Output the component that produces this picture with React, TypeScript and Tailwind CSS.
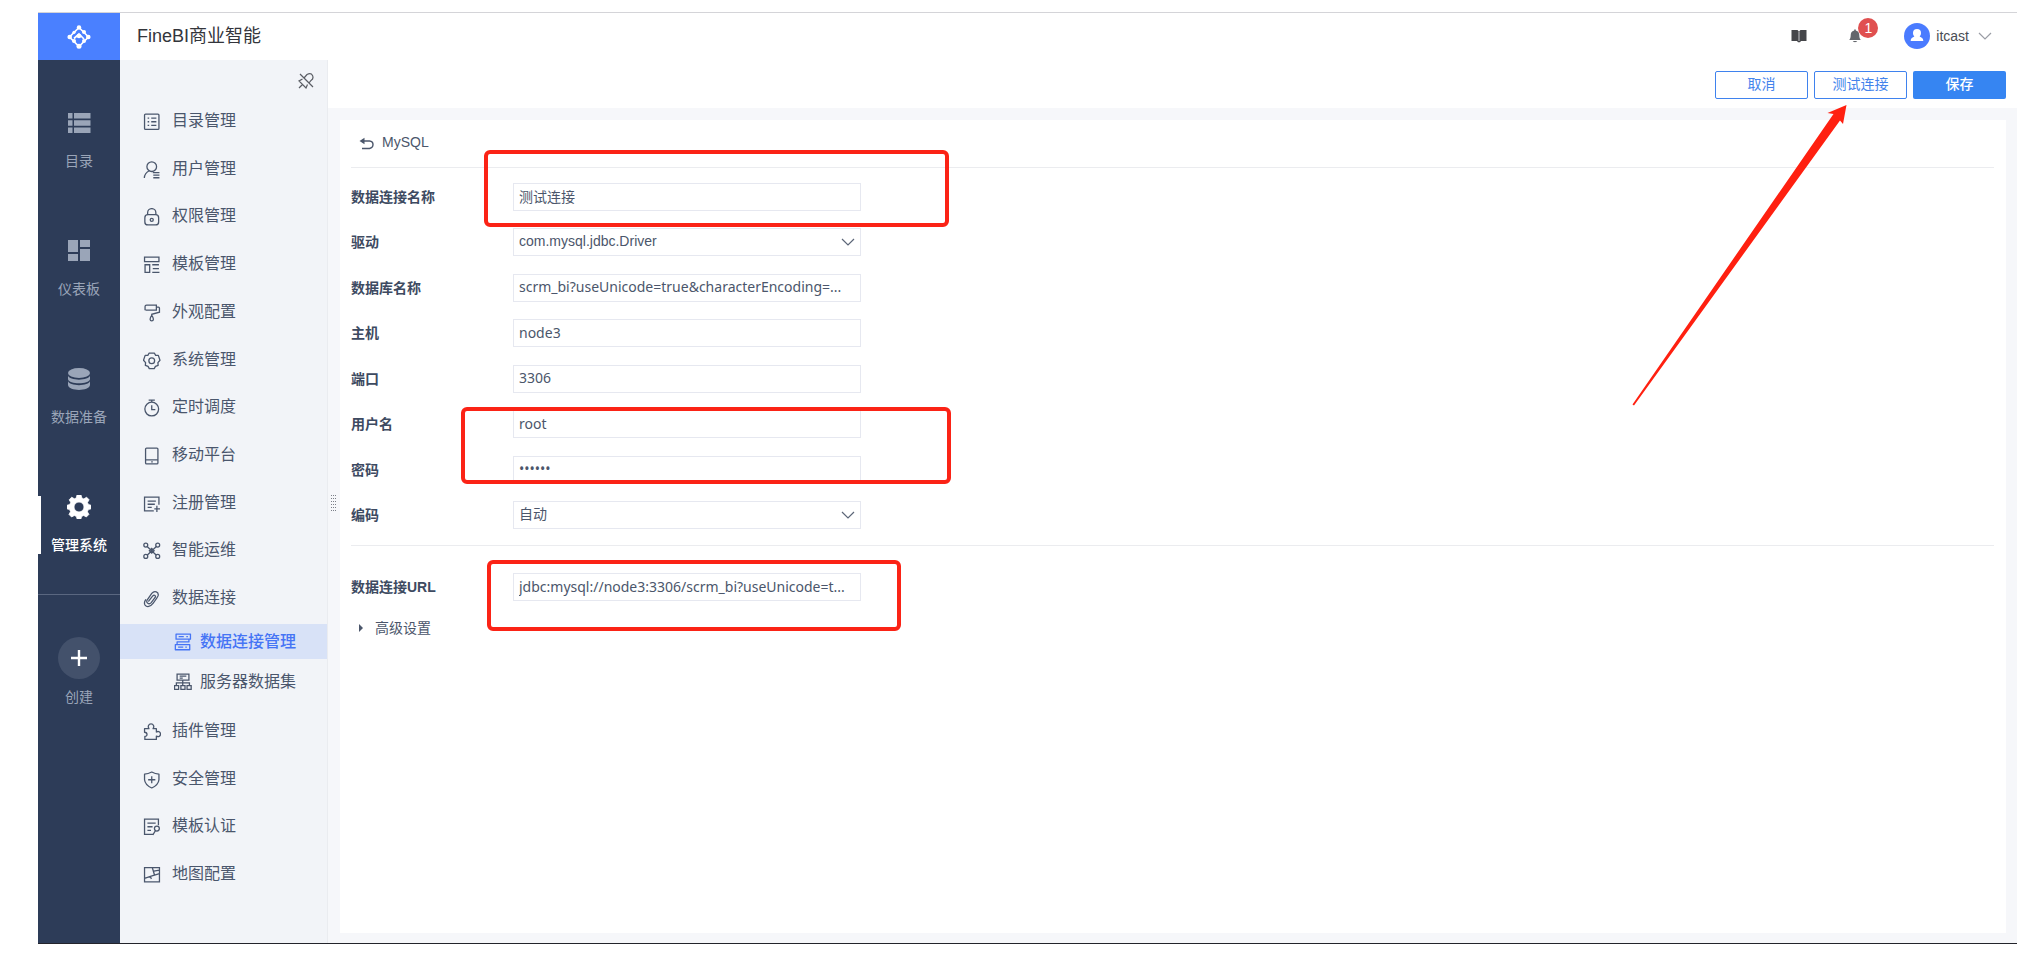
import type { ReactNode } from "react";

type IconName =
  | "catalog" | "user" | "lock" | "template" | "paint" | "gear" | "timer" | "mobile" | "register"
  | "ops" | "link" | "connection" | "server" | "plugin" | "shield" | "certify" | "map";

const shapes: Record<IconName, ReactNode> = {
  catalog: (
    <>
      <rect x="1" y="1" width="14" height="15" rx="1" />
      <path d="M4 5h1.500M7.500 5H12.500M4 8.500h1.500M7.500 8.500H12.500M4 12h1.500M7.500 12H12.500" />
    </>
  ),
  user: (
    <>
      <circle cx="8" cy="5.500" r="4.700" />
      <path d="M5.500 9.500C2.500 11 1 13 .8 16.500M9 11.300h6.500M9.500 13.800h6M9.500 16.300h6" />
    </>
  ),
  lock: (
    <>
      <rect x="1.300" y="6.500" width="13.400" height="10" rx="3" />
      <path d="M4 6.500V4.600a4 4 0 0 1 8 0v1.900" />
      <circle cx="8" cy="11.500" r="1.500" />
    </>
  ),
  template: (
    <path d="M1 1h14v4.500H1zM1.500 8.500H6V16H1.500zM8.500 8.500H15M9 12.200h6M8.500 16H15.500" />
  ),
  paint: (
    <path d="M1.500 6V2.500Q1.500 1 3 1h9.500v5H2M12.500 3h2q1 0 1 1.200V8L8 10v1.200M8 11c-2.300 3-2 5.500 0 5.500s2.300-2.500 0-5.500" />
  ),
  gear: (
    <>
      <path d="M5.500 1h5l1.300 2.300h2.600L16 8l-2 2.300.2 2.700-2.600 1-1.200 2.200H5.600L4.400 14l-2.600-1 .2-2.700L0 8l1.600-4.700h2.600z" strokeLinejoin="round" />
      <circle cx="8" cy="8.500" r="2.800" />
    </>
  ),
  timer: (
    <>
      <circle cx="8" cy="9.800" r="6.700" />
      <path d="M5 1h6M8 1v2M8 6v4.300h3.500" />
    </>
  ),
  mobile: (
    <>
      <rect x="2" y="1" width="12" height="15.500" rx="1" />
      <path d="M2 12.500h12M7.500 14.500h1.500" />
    </>
  ),
  register: (
    <path d="M15 9.500V2H1v13.500h9M4 6h8M4 9h7M4 12h4M13 10.500v6M10.500 13.500h5.500" />
  ),
  ops: (
    <>
      <circle cx="2.200" cy="3" r="1.900" />
      <circle cx="13.800" cy="3" r="1.900" />
      <circle cx="2.200" cy="14" r="1.900" />
      <circle cx="13.800" cy="14" r="1.900" />
      <path d="M3.500 4.300 12.500 12.800M12.500 4.300 3.500 12.800M8 6.200l2.300 2.300L8 10.800 5.700 8.500z" />
    </>
  ),
  link: (
    <path d="M5 10.800 9 5.800c1.500-1.600 3.300-.2 2.300 1.500L7.500 12.300c-2.300 2.300-5.300.3-4-2.500L8 3.300c2.800-3.300 7-1.300 6.200 2.200-.5 1.700-2.700 4.500-5.200 7.800-2.300 3-5.700 3.800-7.500 1.300C.5 13 1 11 2 9.500" strokeLinecap="round" />
  ),
  connection: (
    <path d="M1.500 1h14v5h-14zM.8 11.300h14v5h-14zM4 3.500h5M11.500 3.500H13M3.500 13.800h5M10.500 13.800H12M14 6v2.700H2.500v2.600" strokeLinejoin="round" />
  ),
  server: (
    <path d="M2.500 1h11.500v6H2.500zM5 3h6.500M5 5H8M8 7v6M1.800 12V9.500h12.700V12M0 12.200h4V16H0zM6.200 12.200h4V16h-4zM12.200 12.200h4V16h-4z" />
  ),
  plugin: (
    <path d="M1 5.500h4.300C3.800 3.300 5 .8 7.300.8s3.500 2.500 2 4.700h3.200v3.300c2-1.300 4 0 4 2s-2 3.200-4 2v3.200H1.300v-3C4 13.200 4.300 9.200 1 9z" strokeLinejoin="round" />
  ),
  shield: (
    <path d="M8 1q3.500 2 7 2v5.500Q14.500 13.500 8 16.500 1.500 13.500 1 8.500V3q3.500 0 7-2zM8 5v7M4.500 8.500h7" strokeLinejoin="round" />
  ),
  certify: (
    <>
      <path d="M14.500 7V1H1v15h8.500M3.800 5h8M3.800 8.500h5M3.800 12h3.500" />
      <circle cx="13" cy="10.300" r="2.400" />
      <path d="m11.500 12.500-2.500 4" />
    </>
  ),
  map: (
    <path d="M1 1.500h14.500v14H1zM8.500 1.500l2.200 7.300M1 12l6.500-2.200 8-2.300M6.500 10.200l1.200 2.300M10 5l5.500-1" />
  ),
};

function Icon({ name }: { name: IconName }) {
  return (
    <svg viewBox="-0.5 0 17.5 17.5" className="size-[18px] shrink-0" fill="none" stroke="currentColor" strokeWidth="1.250" aria-hidden="true">
      {shapes[name]}
    </svg>
  );
}

function MenuItem({ icon, label }: { icon: IconName; label: string }) {
  return (
    <a href="#" className="flex flex-1 items-center gap-[11px] pl-[23px]">
      <Icon name={icon} />
      <span className="pb-[2px]">{label}</span>
    </a>
  );
}

function RailItem({ label, active, children }: { label: string; active?: boolean; children: ReactNode }) {
  return (
    <a
      href="#"
      className={
        active
          ? "relative flex h-32 flex-col items-center justify-center gap-4 text-white before:absolute before:left-0 before:h-[58px] before:w-[3px] before:bg-white"
          : "flex h-32 flex-col items-center justify-center gap-4 text-[#9aa5b8]"
      }
    >
      <svg viewBox="0 0 24 24" className="size-6" fill="currentColor" aria-hidden="true">
        {children}
      </svg>
      <span className={active ? "text-sm leading-5 font-medium" : "text-sm leading-5"}>{label}</span>
    </a>
  );
}

const top: [IconName, string][] = [
  ["catalog", "目录管理"], ["user", "用户管理"], ["lock", "权限管理"], ["template", "模板管理"],
  ["paint", "外观配置"], ["gear", "系统管理"], ["timer", "定时调度"], ["mobile", "移动平台"],
  ["register", "注册管理"], ["ops", "智能运维"], ["link", "数据连接"],
];
const bottom: [IconName, string][] = [
  ["plugin", "插件管理"], ["shield", "安全管理"], ["certify", "模板认证"], ["map", "地图配置"],
];

type FieldProps = { id: string; label: string; value: string; kind?: "text" | "password" | "select"; latin?: boolean };

function Field({ id, label, value, kind = "text", latin }: FieldProps) {
  const face = latin ? "font-['Noto_Sans','Noto_Sans_CJK_SC',sans-serif]" : "";
  const box = "h-7 w-full border border-[#e6e8f0] bg-white px-[5px] pb-[2px] text-sm text-[#4b566b] outline-none";
  return (
    <div className="flex items-center">
      <label htmlFor={id} className="w-[162px] shrink-0 text-sm leading-5 font-bold text-[#3d4a61]">
        {label}
      </label>
      <div className="relative w-[348px]">
        {kind === "select" ? (
          <>
            <select id={id} className={`${box} appearance-none ${face}`} defaultValue={value}>
              <option>{value}</option>
            </select>
            <Chevron className="pointer-events-none absolute top-[10px] right-[6px] h-2 w-[14px] text-[#5c6678]" />
          </>
        ) : (
          <input id={id} type={kind} className={`${box} text-ellipsis ${face}`} defaultValue={value} />
        )}
      </div>
    </div>
  );
}

function Chevron({ className }: { className: string }) {
  return (
    <svg viewBox="0 0 14 8" className={className} fill="none" stroke="currentColor" strokeWidth="1.200" aria-hidden="true">
      <path d="m1 1 6 6 6-6" />
    </svg>
  );
}

export default function App() {
  return (
    <div className="relative flex min-h-screen flex-col bg-white pt-3 pr-1 pb-[15px] pl-[38px] font-['Liberation_Sans','Noto_Sans_CJK_SC',sans-serif]">
      <div className="flex flex-1 border-t border-b border-t-[#d4d4d8] border-b-[#23242b]">
        <nav className="flex w-[82px] shrink-0 flex-col bg-[#2d3c58]">
          <a href="#" aria-label="FineBI" className="flex h-[47px] items-center justify-center bg-[#4a80ff] text-white">
            <svg viewBox="0 0 24 24" className="size-6" fill="none" stroke="currentColor" strokeWidth="1.700" aria-hidden="true">
              <path d="M12 2.500 2.500 12 12 21.500l5-5M12 2.500l5 5M17.500 8l4 4-4.500 4.500M7 13.500l5-4.500 5 5" />
              <g fill="currentColor" stroke="none">
                <circle cx="12" cy="2.500" r="2.200" />
                <circle cx="2.700" cy="12" r="2.300" />
                <circle cx="21.300" cy="12" r="2.300" />
                <circle cx="12" cy="21.300" r="2.500" />
                <circle cx="12" cy="11" r="2.300" />
                <circle cx="17" cy="7" r="2" />
                <circle cx="7" cy="7.300" r="1.600" />
                <circle cx="7" cy="16" r="2" />
                <circle cx="17" cy="16" r="2" />
              </g>
            </svg>
          </a>
          <div className="flex flex-col pt-[17px]">
            <RailItem label="目录">
              <path d="M1 2h4.500v5.500H1zM7 2h16.500v5.500H7zM1 9.200h4.500v5.500H1zM7 9.200h16.500v5.500H7zM1 16.400h4.500v5.600H1zM7 16.400h16.500v5.600H7z" />
            </RailItem>
            <RailItem label="仪表板">
              <path d="M1 1h10v12H1zM13 1h10v7H13zM1 15h10v7H1zM13 10h10v12H13z" />
            </RailItem>
            <RailItem label="数据准备">
              <ellipse cx="12" cy="6" rx="11" ry="5" />
              <path d="M1 8.500c1 5.500 21 5.500 22 0v3.700c-1 5.500-21 5.500-22 0zM1 14c1 5.500 21 5.500 22 0v4c-1 6.500-21 6.500-22 0z" />
            </RailItem>
            <RailItem label="管理系统" active>
              <path
                fillRule="evenodd"
                d="M10 0h4l.8 3 2 .9L19.600 2.200l2.500 2.600-1.600 2.600.9 2.100 2.600.8v3.500l-2.700.8-.9 2.200 1.500 2.600-2.600 2.600-2.600-1.500-2.100.9-.8 2.900h-3.600l-.8-2.900-2.100-.9-2.700 1.500-2.600-2.600 1.500-2.700-.9-2.100L0 13.800v-3.500l2.800-.8.9-2.200-1.500-2.500 2.500-2.600 2.700 1.600 1.900-.8zM12 7a5 5 0 1 0 0 10 5 5 0 0 0 0-10z"
                stroke="currentColor"
                strokeWidth=".8"
                strokeLinejoin="round"
              />
            </RailItem>
          </div>
          <button type="button" className="mt-[5px] flex flex-col items-center gap-2 border-t border-[#5a6780] pt-[42px] text-[#9aa5b8]">
            <span className="flex size-[42px] items-center justify-center rounded-full bg-[#43516b] text-white">
              <svg viewBox="0 0 18 18" className="size-[18px]" stroke="currentColor" strokeWidth="2.400" aria-hidden="true">
                <path d="M9 1v16M1 9h16" />
              </svg>
            </span>
            <span className="text-sm leading-5">创建</span>
          </button>
        </nav>

        <div className="flex min-w-0 flex-1 flex-col">
          <header className="flex h-[47px] items-center justify-between pr-[25px] pl-[17px]">
            <h1 className="pb-[2px] text-lg text-[#33353b]">FineBI商业智能</h1>
            <div className="flex items-center pb-px">
              <button type="button" aria-label="帮助文档" className="text-[#45464a]">
                <svg viewBox="0 0 16 14" className="h-[14px] w-4" fill="currentColor" aria-hidden="true">
                  <path d="M.5 1h6L8 2.500 9.500 1h6v11H10l-1 1.200H7L6 12H.5z" />
                  <path d="M8 2.500V12" stroke="#c8c8cc" strokeWidth="1" />
                </svg>
              </button>
              <button type="button" aria-label="消息" className="relative ml-[42px] text-[#63666c]">
                <svg viewBox="0 0 12 14" className="h-[14px] w-3" fill="currentColor" aria-hidden="true">
                  <path d="M5.200.5h1.600v1C9.500 2 10.300 4 10.300 6.500c0 2.500.7 3.500 1.500 4.500H.2c.8-1 1.500-2 1.500-4.500C1.700 4 2.500 2 5.200 1.500zM3.800 12h4.400c-.5 1.500-3.900 1.500-4.400 0z" />
                </svg>
                <span className="absolute -top-[11px] left-[9px] flex size-5 items-center justify-center rounded-full bg-[#e05050] text-sm leading-4 text-white">1</span>
              </button>
              <button type="button" className="ml-[43px] flex items-center text-sm text-[#4a4d55]">
                <svg viewBox="0 0 26 26" className="size-[26px]" aria-hidden="true">
                  <circle cx="13" cy="13" r="13" fill="#4a7bff" />
                  <path d="M13 6a4 4 0 0 1 4 4c0 1.700-.6 2.700-1.300 3.300.5 1.200 3.600 1 3.600 4.700H6.700c0-3.700 3.100-3.500 3.600-4.700C9.600 12.700 9 11.700 9 10a4 4 0 0 1 4-4z" fill="#fff" />
                </svg>
                <span className="ml-[6px]">itcast</span>
                <Chevron className="ml-[9px] h-2 w-[14px] text-[#9a9da5]" />
              </button>
            </div>
          </header>

          <div className="flex min-h-0 flex-1">
            <aside className="flex w-[208px] shrink-0 flex-col border-r border-[#eaecf0] bg-[#f2f4f8] pb-11 text-base text-[#4a566c]">
              <div className="flex h-[38px] shrink-0 items-center justify-end pt-[3px] pr-[13px]">
                <button type="button" aria-label="取消固定" className="text-[#5a5d64]">
                  <svg viewBox="0 0 16 16" className="size-4" fill="none" stroke="currentColor" strokeWidth="1.200" aria-hidden="true">
                    <path d="m2 1 13 13M6 5l3-3.500q4-2 5.500 1t-1.500 5L11 10M4.500 6 1 8l7 7 1.500-3.500M4.500 11.500 1 15" />
                  </svg>
                </button>
              </div>
              <div className="flex flex-1 flex-col">
                {top.map(([icon, label]) => (
                  <MenuItem key={label} icon={icon} label={label} />
                ))}
                <div className="pt-px pb-[7px]">
                  <a href="#" className="flex h-[35px] items-center gap-2 bg-[#d8e2f7] pl-[54px] font-medium text-[#4574f5]">
                    <Icon name="connection" />
                    <span>数据连接管理</span>
                  </a>
                  <a href="#" className="flex h-[42px] items-center gap-2 pt-1 pl-[54px]">
                    <Icon name="server" />
                    <span>服务器数据集</span>
                  </a>
                </div>
                {bottom.map(([icon, label]) => (
                  <MenuItem key={label} icon={icon} label={label} />
                ))}
              </div>
            </aside>

            <div className="flex min-w-0 flex-1 flex-col">
              <div className="flex h-12 items-start justify-end gap-[6px] pt-[11px] pr-[11px] text-sm">
                <button type="button" className="h-7 w-[93px] rounded-xs border border-[#3f82ee] pb-[2px] text-[#4383ec]">取消</button>
                <button type="button" className="h-7 w-[93px] rounded-xs border border-[#3f82ee] pb-[2px] text-[#4383ec]">测试连接</button>
                <button type="button" className="h-7 w-[93px] rounded-xs bg-[#3685f2] pb-[2px] font-medium text-white">保存</button>
              </div>
              <main className="flex flex-1 bg-[#f6f7fa] pt-3 pr-[11px] pb-[10px]">
                <div className="flex w-3 items-center justify-center pb-[48px]" role="separator">
                  <svg viewBox="0 0 6 16" className="h-4 w-[6px]" fill="#7b7f88" aria-hidden="true">
                    {[0, 3, 6, 9, 12, 15].map((y) => (
                      <path key={y} d={`M0 ${y}h1v1H0zM2 ${y}h1v1H2zM4 ${y}h1v1H4z`} />
                    ))}
                  </svg>
                </div>
                <section className="flex-1 bg-white pr-3 pl-[11px]">
                  <div className="flex h-12 items-center gap-2 border-b border-[#ebecef] pl-2 text-sm text-[#4b566b]">
                    <svg viewBox="0 0 15 14" className="h-[14px] w-[15px]" fill="none" stroke="currentColor" strokeWidth="1.400" aria-hidden="true">
                      <path d="M2 4h8.500q3.500.3 3.500 3.500T10.500 11.500H3" />
                      <path d="M5.500.8v6.400L.5 4z" fill="currentColor" stroke="none" />
                    </svg>
                    <span className="pb-1">MySQL</span>
                  </div>
                  <form>
                    <div className="flex h-[378px] flex-col justify-between border-b border-[#ebecef] pt-[15px] pb-4">
                      <Field id="name" label="数据连接名称" value="测试连接" />
                      <Field id="driver" label="驱动" value="com.mysql.jdbc.Driver" kind="select" />
                      <Field id="database" label="数据库名称" value="scrm_bi?useUnicode=true&characterEncoding=..." latin />
                      <Field id="host" label="主机" value="node3" latin />
                      <Field id="port" label="端口" value="3306" latin />
                      <Field id="user" label="用户名" value="root" latin />
                      <Field id="password" label="密码" value="123456" kind="password" latin />
                      <Field id="encoding" label="编码" value="自动" kind="select" />
                    </div>
                    <div className="pt-[27px]">
                      <Field id="url" label="数据连接URL" value="jdbc:mysql://node3:3306/scrm_bi?useUnicode=t..." latin />
                    </div>
                    <button type="button" className="mt-[17px] flex items-center gap-3 pl-2 text-sm text-[#4b566b]">
                      <svg viewBox="0 0 4 8" className="h-2 w-1" fill="currentColor" aria-hidden="true">
                        <path d="m0 0 4 4-4 4z" />
                      </svg>
                      高级设置
                    </button>
                  </form>
                </section>
              </main>
            </div>
          </div>
        </div>
      </div>

      <div className="pointer-events-none absolute top-[150px] left-[484px] h-[77px] w-[465px] rounded-md border-4 border-[#fb2316]" />
      <div className="pointer-events-none absolute top-[407px] left-[461px] h-[77px] w-[490px] rounded-md border-4 border-[#fb2316]" />
      <div className="pointer-events-none absolute top-[560px] left-[487px] h-[71px] w-[414px] rounded-md border-4 border-[#fb2316]" />
      <svg viewBox="0 0 216 302" className="pointer-events-none absolute top-[105px] right-[173px] h-[302px] w-[216px]" fill="#ff2010" aria-hidden="true">
        <path d="M214.500 0 211 19 208 15.500 2 300.500.5 299.500 201.500 9 195.500 8z" />
      </svg>
    </div>
  );
}
